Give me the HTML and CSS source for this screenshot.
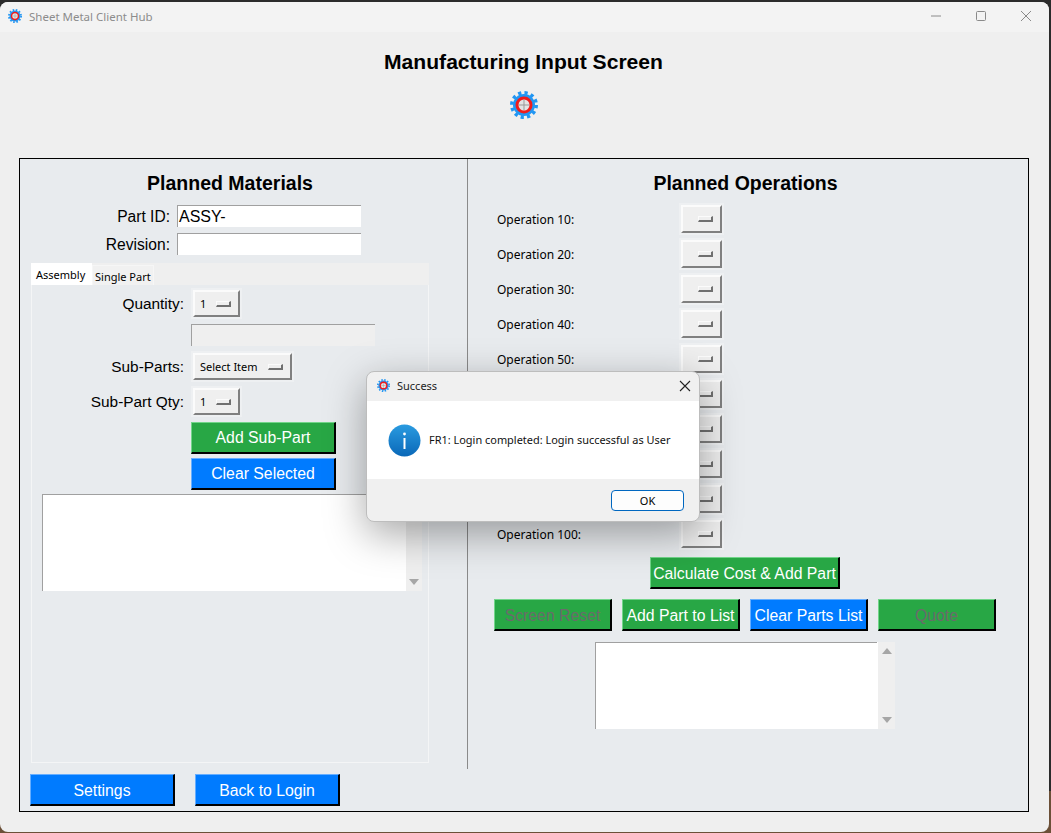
FILE: index.html
```html
<!DOCTYPE html>
<html lang="en">
<head>
    <meta charset="UTF-8">
    <meta name="viewport" content="width=device-width, initial-scale=1.0">
    <title>Sheet Metal Client Hub</title>
    <link rel="stylesheet" href="styles.css">
</head>
<body>
    <svg class="defs" width="0" height="0">
        <symbol id="gear" viewBox="0 0 28 28">
            <circle cx="14" cy="14" r="12.2" fill="none" stroke="#2196f3" stroke-width="3.6" stroke-dasharray="3.2 3.2"/>
            <circle cx="14" cy="14" r="11" fill="#2196f3"/>
            <circle cx="14" cy="14" r="8.5" fill="#f01c1c"/>
            <circle cx="14" cy="14" r="5.5" fill="#e4e4e4"/>
            <path d="M14 9v10M9 14h10" stroke="#999" stroke-width="1"/>
        </symbol>
    </svg>

    <div class="window">
        <div class="titlebar">
            <svg class="title-icon"><use href="#gear"/></svg>
            <span class="title-text">Sheet Metal Client Hub</span>
            <div class="win-controls">
                <svg width="12" height="12" viewBox="0 0 12 12"><path d="M1 6h10" stroke="#8a8a8a"/></svg>
                <svg width="12" height="12" viewBox="0 0 12 12"><rect x="1.5" y="1.5" width="9" height="9" rx="1" fill="none" stroke="#8a8a8a"/></svg>
                <svg width="12" height="12" viewBox="0 0 12 12"><path d="M1 1l10 10M11 1L1 11" stroke="#8a8a8a"/></svg>
            </div>
        </div>

        <h1 class="page-title">Manufacturing Input Screen</h1>
        <svg class="page-icon"><use href="#gear"/></svg>

        <div class="frame">
            <div class="columns">
                <div class="col-left">
                    <h2 class="col-heading">Planned Materials</h2>
                    <div class="field-row">
                        <label class="field-label">Part ID:</label>
                        <div class="entry">ASSY-</div>
                    </div>
                    <div class="field-row">
                        <label class="field-label">Revision:</label>
                        <div class="entry"></div>
                    </div>

                    <div class="tabs">
                        <div class="tab-bar">
                            <div class="tab tab-active">Assembly</div>
                            <div class="tab">Single Part</div>
                        </div>
                        <div class="tab-pane">
                            <div class="pane-row">
                                <span class="pane-label">Quantity:</span>
                                <div class="menu-btn menu-small"><span>1</span><i class="indicator"></i></div>
                            </div>
                            <div class="entry entry-off"></div>
                            <div class="pane-row">
                                <span class="pane-label">Sub-Parts:</span>
                                <div class="menu-btn menu-wide"><span>Select Item</span><i class="indicator"></i></div>
                            </div>
                            <div class="pane-row">
                                <span class="pane-label">Sub-Part Qty:</span>
                                <div class="menu-btn menu-small"><span>1</span><i class="indicator"></i></div>
                            </div>
                            <div class="btn btn-green btn-pane">Add Sub-Part</div>
                            <div class="btn btn-blue btn-pane btn-pane-2">Clear Selected</div>
                            <div class="list-wrap list-sub">
                                <div class="listbox"></div>
                                <div class="scrollbar"><i class="arrow-up"></i><i class="arrow-down"></i></div>
                            </div>
                        </div>
                    </div>
                </div>

                <div class="col-right">
                    <h2 class="col-heading">Planned Operations</h2>
                    <div class="ops">
                        <div class="op-row"><span class="op-label">Operation 10:</span><div class="menu-btn menu-op"><i class="indicator"></i></div></div>
                        <div class="op-row"><span class="op-label">Operation 20:</span><div class="menu-btn menu-op"><i class="indicator"></i></div></div>
                        <div class="op-row"><span class="op-label">Operation 30:</span><div class="menu-btn menu-op"><i class="indicator"></i></div></div>
                        <div class="op-row"><span class="op-label">Operation 40:</span><div class="menu-btn menu-op"><i class="indicator"></i></div></div>
                        <div class="op-row"><span class="op-label">Operation 50:</span><div class="menu-btn menu-op"><i class="indicator"></i></div></div>
                        <!-- rows 60-90: labels sit behind the dialog -->
                        <div class="op-row"><span class="op-label"></span><div class="menu-btn menu-op"><i class="indicator"></i></div></div>
                        <div class="op-row"><span class="op-label"></span><div class="menu-btn menu-op"><i class="indicator"></i></div></div>
                        <div class="op-row"><span class="op-label"></span><div class="menu-btn menu-op"><i class="indicator"></i></div></div>
                        <div class="op-row"><span class="op-label"></span><div class="menu-btn menu-op"><i class="indicator"></i></div></div>
                        <div class="op-row"><span class="op-label">Operation 100:</span><div class="menu-btn menu-op"><i class="indicator"></i></div></div>
                    </div>
                    <div class="btn btn-green btn-calc">Calculate Cost &amp; Add Part</div>
                    <div class="action-row">
                        <div class="btn btn-green btn-action btn-off">Screen Reset</div>
                        <div class="btn btn-green btn-action">Add Part to List</div>
                        <div class="btn btn-blue btn-action">Clear Parts List</div>
                        <div class="btn btn-green btn-action btn-off">Quote</div>
                    </div>
                    <div class="list-wrap list-parts">
                        <div class="listbox"></div>
                        <div class="scrollbar"><i class="arrow-up"></i><i class="arrow-down"></i></div>
                    </div>
                </div>
            </div>
            <div class="bottom-row">
                <div class="btn btn-blue btn-bottom">Settings</div>
                <div class="btn btn-blue btn-bottom">Back to Login</div>
            </div>
        </div>

        <div class="dialog">
            <div class="dialog-head">
                <svg class="dialog-icon"><use href="#gear"/></svg>
                <span class="dialog-title">Success</span>
                <svg class="dialog-close" width="12" height="12" viewBox="0 0 12 12"><path d="M1 1l10 10M11 1L1 11" stroke="#222" stroke-width="1.1"/></svg>
            </div>
            <div class="dialog-body">
                <svg width="33" height="33" viewBox="0 0 33 33">
                    <defs>
                        <linearGradient id="infoBlue" x1="0" y1="0" x2="0" y2="1">
                            <stop offset="0" stop-color="#2a9be0"/>
                            <stop offset="1" stop-color="#0a68b8"/>
                        </linearGradient>
                    </defs>
                    <circle cx="16.5" cy="16.5" r="16" fill="url(#infoBlue)"/>
                    <circle cx="16.5" cy="10" r="1.4" fill="#fff"/>
                    <rect x="15.5" y="14" width="2" height="11" fill="#fff"/>
                </svg>
                <span class="dialog-msg">FR1: Login completed: Login successful as User</span>
            </div>
            <div class="dialog-foot">
                <div class="dialog-ok">OK</div>
            </div>
        </div>
    </div>
</body>
</html>
```

FILE: styles.css
```css
* { box-sizing: border-box; }
html, body { margin: 0; height: 100%; }
body { background: linear-gradient(#2b2b2b 0 95%, #6b5038 95%); overflow: hidden; font-family: "Liberation Sans", Arial, sans-serif; color: #000; }
.defs { position: absolute; }

.window { position: relative; width: 1049px; height: 830px; margin-top: 2px; background: #efefef; border-radius: 8px; overflow: hidden; }

.titlebar { display: flex; align-items: center; height: 30px; padding: 0 0 2px 8px; background: #f3f3f3; }
.title-icon { width: 14px; height: 14px; }
.title-text { margin-left: 7px; font-family: "Noto Sans", sans-serif; font-size: 11.5px; color: #8c8c8c; }
.win-controls { display: flex; gap: 33px; margin-left: auto; padding-right: 17px; }

.page-title { margin: 16px 0 0 -2px; text-align: center; font-size: 21.1px; line-height: 28px; font-weight: bold; }
.page-icon { display: block; width: 28px; height: 28px; margin: 15px 0 0 510px; }

.frame { width: 1010px; height: 654px; margin: 39px 0 0 19px; border: 1px solid #000; background: #e8ebee; }
.columns { display: flex; height: 610px; }
.col-left { width: 448px; padding: 12px 0 0 11px; border-right: 1px solid #8a8a8a; }
.col-right { flex: 1; padding-top: 12px; }
.col-heading { margin: 0 0 10px; font-size: 19.5px; line-height: 24px; font-weight: bold; text-align: center; }
.col-left .col-heading { margin-right: 38px; }
.col-right .col-heading { margin-right: 5px; }

.field-row { display: flex; align-items: center; gap: 7px; height: 22px; margin-bottom: 6px; }
.field-label { width: 139px; padding-top: 1px; text-align: right; font-size: 15.6px; }
.entry { width: 184px; height: 22px; padding-left: 1px; background: #fff; border-top: 1px solid #a0a0a0; border-left: 1px solid #a0a0a0; font-size: 16px; line-height: 21px; }

.tabs { width: 398px; height: 500px; margin-top: 8px; background: #efefef; }
.tab-bar { display: flex; align-items: flex-end; height: 22px; }
.tab { height: 20px; padding: 1px 2px 0; font-family: "Noto Sans", sans-serif; font-size: 11px; line-height: 20px; background: #f1f1f1; border: 1px solid #f6f6f6; border-bottom: 0; }
.tab-active { width: 61px; height: 22px; padding: 1px 0 0 5px; background: #fff; line-height: 21px; border: 0; }
.tab-pane { height: 478px; padding: 5px 0 0 10px; background: #e8ebee; border: 1px solid #f4f5f6; border-top: 0; }

.pane-row { display: flex; align-items: center; height: 27px; margin-bottom: 8px; }
.pane-label { width: 141px; margin: 0 9px 0 1px; text-align: right; font-size: 15.4px; }
.pane-row:first-child { margin-bottom: 7px; }
.tab-pane .entry-off { width: 184px; margin: 0 0 7px 149px; background: #efefef; }

.menu-btn { display: flex; align-items: center; justify-content: space-between; height: 27px; padding: 0 7px 0 5px; background: #efefef; border: 2px solid; border-color: #fbfbfb #808080 #808080 #fbfbfb; outline: 2px solid #eef0f2; font-family: "Noto Sans", sans-serif; font-size: 11px; }
.menu-small { width: 47px; }
.menu-wide { width: 99px; }
.menu-op { width: 41px; height: 28px; justify-content: flex-end; }
.indicator { display: block; width: 15px; height: 6px; background: #efefef; border: 1px solid; border-color: #fbfbfb #707070 #707070 #fbfbfb; border-width: 1px 2px 2px 1px; }

.btn { display: flex; align-items: center; justify-content: center; height: 32px; padding-top: 3px; color: #fff; font-size: 15.8px; border: 2px solid #000; border-top: 1px solid; border-left: 1px solid; white-space: nowrap; }
.btn-blue { background: #007bff; border-top-color: #66aeff; border-left-color: #66aeff; }
.btn-green { background: #28a745; border-top-color: #72d58a; border-left-color: #72d58a; }
.btn-off { color: #6b6b6b; }

.btn-pane { width: 145px; margin-left: 149px; margin-top: -1px; padding-top: 1px; }
.btn-pane-2 { margin-top: 4px; }

.list-wrap { display: flex; }
.listbox { background: #fff; border-top: 1px solid #a0a0a0; border-left: 1px solid #a0a0a0; }
.scrollbar { display: flex; flex-direction: column; justify-content: space-between; align-items: center; width: 18px; padding: 6px 0; background: #efefef; border-left: 1px solid #fff; }
.arrow-up { border: 5px solid transparent; border-top: 0; border-bottom: 6px solid #a6a6a6; }
.arrow-down { border: 5px solid transparent; border-bottom: 0; border-top: 6px solid #a6a6a6; }
.list-sub { height: 97px; margin: 4px 0 0 0; }
.list-sub .listbox { width: 363px; }
.list-sub .scrollbar { width: 17px; }
.list-parts { height: 87px; margin: 11px 0 0 127px; }
.list-parts .listbox { width: 282px; }

.ops { margin: 0 0 0 29px; }
.op-row { display: flex; align-items: center; height: 28px; margin-bottom: 7px; }
.op-label { width: 184px; font-family: "Noto Sans", sans-serif; font-size: 12px; }

.btn-calc { width: 190px; margin: 9px 0 0 182px; }
.action-row { display: flex; gap: 10px; margin: 10px 0 0 26px; }
.btn-action { width: 118px; }

.bottom-row { display: flex; gap: 20px; padding: 5px 0 0 10px; }
.btn-bottom { width: 145px; }

.dialog { position: absolute; left: 366px; top: 369px; width: 334px; height: 151px; background: #f0f0f0; border: 1px solid #bdbdbd; border-radius: 8px; overflow: hidden; box-shadow: 0 12px 40px rgba(0, 0, 0, .35); }
.dialog-head { display: flex; align-items: center; height: 29px; padding: 0 0 2px 10px; }
.dialog-icon { width: 13px; height: 13px; }
.dialog-title { margin-left: 7px; font-family: "Noto Sans", sans-serif; font-size: 11px; color: #222; }
.dialog-close { margin-left: auto; margin-right: 8px; }
.dialog-body { display: flex; align-items: center; gap: 8px; height: 78px; padding-left: 21px; background: #fff; }
.dialog-msg { padding-bottom: 1px; font-family: "Noto Sans", sans-serif; font-size: 10.95px; color: #111; }
.dialog-foot { display: flex; justify-content: flex-end; padding: 11px 15px 0 0; }
.dialog-ok { width: 73px; height: 21px; background: #fdfdfd; border: 1px solid #0067c0; border-radius: 4px; font-family: "Noto Sans", sans-serif; font-size: 11px; line-height: 19px; text-align: center; }
```
